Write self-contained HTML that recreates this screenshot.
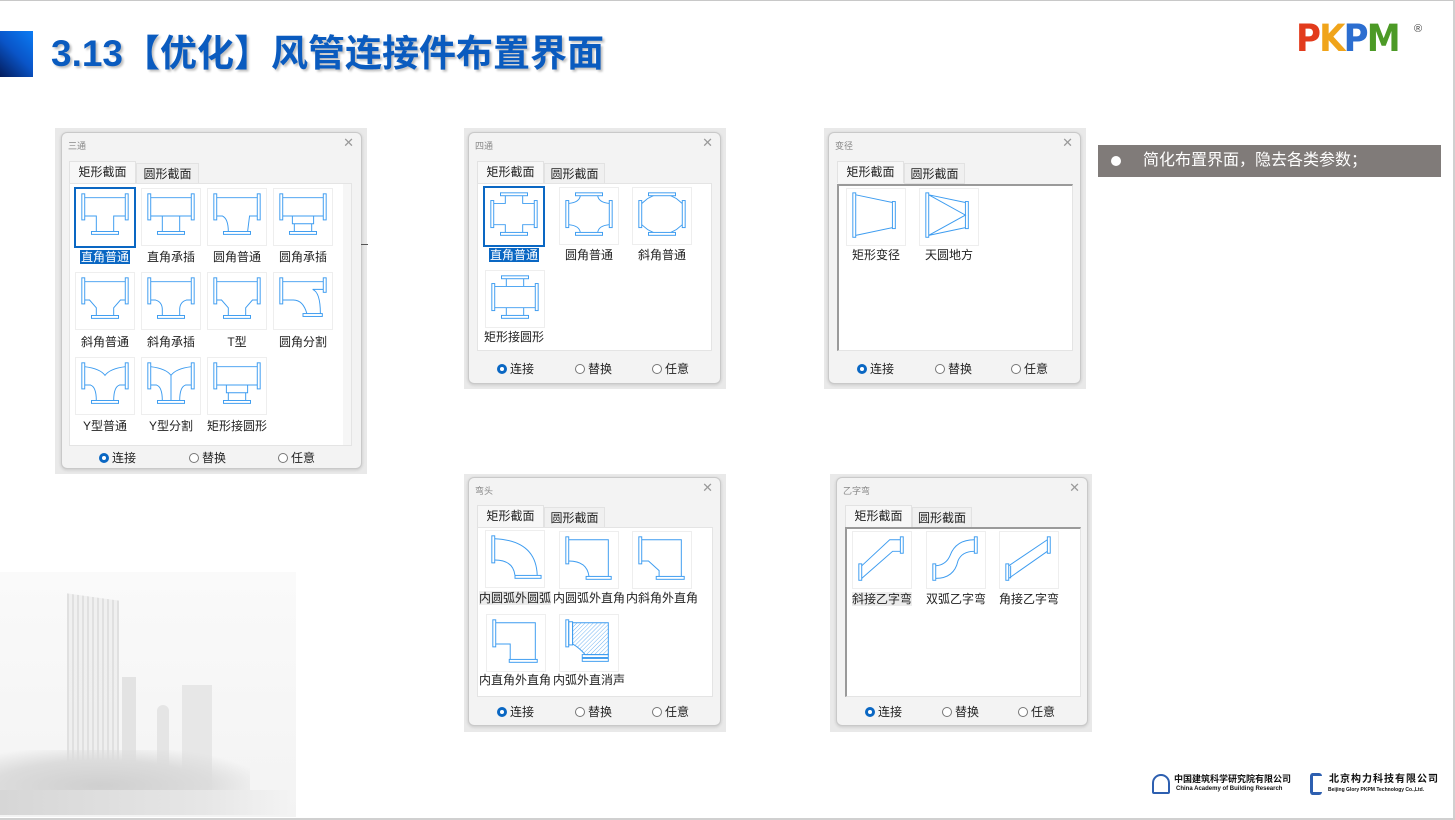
<!DOCTYPE html>
<html><head><meta charset="utf-8">
<style>
*{margin:0;padding:0;box-sizing:border-box}
body{width:1455px;height:820px;position:relative;overflow:hidden;background:#fff;font-family:"Liberation Sans","Noto Sans CJK SC",sans-serif;color:#222}
.a{position:absolute}
.outer{position:absolute;background:#e9e9e9}
.win{position:absolute;background:#f3f3f3;border:1px solid #c9c9c9;border-radius:6px;box-shadow:0 1px 3px rgba(0,0,0,.15)}
.tt{position:absolute;font-size:9px;color:#888;left:6px;top:6px}
.x{position:absolute;right:7px;top:2px;font-size:13px;color:#999}
.tab{position:absolute;height:21px;font-size:12px;line-height:20px;text-align:center;border:1px solid #e2e2e2;background:#f0f0f0;color:#222}
.tab.on{background:#f7f7f7;border-bottom:none;height:22px}
.pan{position:absolute;background:#fff;border:1px solid #e4e4e4}
.pan.in{border-left:2px solid #9a9a9a;border-top:2px solid #9a9a9a}
.ic{position:absolute;width:60px;height:58px;background:#fff;border:1px solid #eee}
.ic.sel{border:2px solid #0a67c3}
.ic svg{position:absolute;left:0;top:0;width:58px;height:56px}
.lb{position:absolute;width:90px;text-align:center;font-size:12px;line-height:15px;color:#222}
.lb span.s{background:#0a67c3;color:#fff;padding:0 1px}
.lb span.h{background:#ececec}
.rd{position:absolute;font-size:12px;line-height:14px;color:#222}
.rd i{display:inline-block;width:10px;height:10px;border:1px solid #777;border-radius:50%;vertical-align:-1px;margin-right:3px;background:#fff}
.rd i.on{border:3px solid #0a67c3}
svg .p{fill:none;stroke:#3d9cf0;stroke-width:1}
</style></head><body>
<svg width="0" height="0" style="position:absolute">
<defs>
<g id="fl"><rect class="p" x="6" y="5" width="3" height="27"/><rect class="p" x="51" y="5" width="3" height="27"/></g>
<symbol id="t1" viewBox="0 0 60 58"><use href="#fl"/><path class="p" d="M9 9H51M9 28H21V44M51 28H39V44"/><rect class="p" x="16" y="44" width="28" height="3"/></symbol>
<symbol id="t2" viewBox="0 0 60 58"><use href="#fl"/><path class="p" d="M9 9H51M9 28H51M21 28V44M39 28V44"/><rect class="p" x="16" y="44" width="28" height="3"/></symbol>
<symbol id="t3" viewBox="0 0 60 58"><use href="#fl"/><path class="p" d="M9 9H51M9 28H15Q21 31 21 44M51 28H43L41 44"/><rect class="p" x="16" y="44" width="28" height="3"/></symbol>
<symbol id="t4" viewBox="0 0 60 58"><use href="#fl"/><path class="p" d="M9 9H51M9 28H51M19 28V36H41V28M21 36V44M39 36V44"/><rect class="p" x="16" y="44" width="28" height="3"/></symbol>
<symbol id="t5" viewBox="0 0 60 58"><use href="#fl"/><path class="p" d="M9 9H51M9 28H14L21 36V44M51 28H46L39 36V44"/><rect class="p" x="16" y="44" width="28" height="3"/></symbol>
<symbol id="t6" viewBox="0 0 60 58"><use href="#fl"/><path class="p" d="M9 9H51M9 28H14Q21 30 21 38V44M51 28H46Q39 30 39 38V44"/><rect class="p" x="16" y="44" width="28" height="3"/></symbol>
<symbol id="t7" viewBox="0 0 60 58"><rect class="p" x="6" y="5" width="3" height="27"/><rect class="p" x="51" y="5" width="3" height="15"/><path class="p" d="M9 9H51M9 28H20Q30 28 34 42M51 17H40Q48 20 48 42"/><rect class="p" x="30" y="42" width="20" height="3"/></symbol>
<symbol id="t8" viewBox="0 0 60 58"><use href="#fl"/><path class="p" d="M9 9Q25 11 30 18Q35 11 51 9M9 28H15Q21 30 21 44M51 28H45Q39 30 39 44"/><rect class="p" x="16" y="44" width="28" height="3"/></symbol>
<symbol id="t9" viewBox="0 0 60 58"><use href="#fl"/><path class="p" d="M9 9Q25 11 30 18Q35 11 51 9M30 18V44M9 28H15Q21 30 21 44M51 28H45Q39 30 39 44"/><rect class="p" x="16" y="44" width="28" height="3"/></symbol>
<symbol id="c1" viewBox="0 0 60 58"><rect class="p" x="6" y="13" width="3" height="28"/><rect class="p" x="51" y="13" width="3" height="28"/><rect class="p" x="16" y="5" width="28" height="3"/><rect class="p" x="16" y="46" width="28" height="3"/><path class="p" d="M21 8V16H9M39 8V16H51M9 38H21V46M51 38H39V46"/></symbol>
<symbol id="c2" viewBox="0 0 60 58"><rect class="p" x="6" y="13" width="3" height="28"/><rect class="p" x="51" y="13" width="3" height="28"/><rect class="p" x="16" y="5" width="28" height="3"/><rect class="p" x="16" y="46" width="28" height="3"/><path class="p" d="M21 8Q20 15 9 16M39 8Q40 15 51 16M9 38Q20 39 21 46M51 38Q40 39 39 46"/></symbol>
<symbol id="c3" viewBox="0 0 60 58"><rect class="p" x="6" y="13" width="3" height="28"/><rect class="p" x="51" y="13" width="3" height="28"/><rect class="p" x="16" y="5" width="28" height="3"/><rect class="p" x="16" y="46" width="28" height="3"/><path class="p" d="M21 8L15 11L9 16M39 8L45 11L51 16M9 38L15 43L21 46M51 38L45 43L39 46"/></symbol>
<symbol id="c4" viewBox="0 0 60 58"><rect class="p" x="6" y="13" width="3" height="28"/><rect class="p" x="51" y="13" width="3" height="28"/><rect class="p" x="16" y="5" width="28" height="3"/><rect class="p" x="16" y="46" width="28" height="3"/><path class="p" d="M21 8V16M39 8V16M9 16H51M9 38H51M21 38V46M39 38V46"/></symbol>
<symbol id="r1" viewBox="0 0 60 58"><rect class="p" x="6" y="4" width="3" height="46"/><rect class="p" x="47" y="13" width="3" height="28"/><path class="p" d="M9 6L47 14M9 48L47 40"/></symbol>
<symbol id="r2" viewBox="0 0 60 58"><rect class="p" x="6" y="4" width="3" height="46"/><rect class="p" x="47" y="13" width="3" height="28"/><path class="p" d="M9 6L47 14M9 48L47 40M9 6L47 27L9 48"/></symbol>
<symbol id="e1" viewBox="0 0 60 58"><rect class="p" x="6" y="5" width="3" height="28"/><path class="p" d="M9 8Q52 10 53 46M9 30Q28 30 30 46"/><rect class="p" x="30" y="46" width="27" height="3"/></symbol>
<symbol id="e2" viewBox="0 0 60 58"><rect class="p" x="6" y="5" width="3" height="28"/><path class="p" d="M9 8H50V46M9 30Q28 30 30 46"/><rect class="p" x="27" y="46" width="26" height="3"/></symbol>
<symbol id="e3" viewBox="0 0 60 58"><rect class="p" x="6" y="5" width="3" height="28"/><path class="p" d="M9 8H50V46M9 30H16L27 40V46"/><rect class="p" x="24" y="46" width="29" height="3"/></symbol>
<symbol id="e4" viewBox="0 0 60 58"><rect class="p" x="6" y="5" width="3" height="28"/><path class="p" d="M9 8H50V46M9 30H24V46"/><rect class="p" x="23" y="46" width="29" height="3"/></symbol>
<pattern id="hatch" width="3" height="3" patternUnits="userSpaceOnUse" patternTransform="rotate(45)"><line x1="0" y1="0" x2="0" y2="3" stroke="#6fb3f2" stroke-width="1"/></pattern>
<symbol id="e5" viewBox="0 0 60 58"><rect class="p" x="6" y="5" width="3" height="28"/><rect class="p" x="9" y="7" width="4" height="24"/><path d="M13 8H50V41H26Q20 34 13 30Z" fill="url(#hatch)" stroke="#3d9cf0"/><rect class="p" x="23" y="41" width="27" height="3"/><rect class="p" x="23" y="45" width="27" height="3"/></symbol>
<symbol id="z1" viewBox="0 0 60 58"><rect class="p" x="6" y="33" width="3" height="17"/><rect class="p" x="49" y="5" width="3" height="17"/><path class="p" d="M9 35L38 8H49M9 48L41 20H49"/></symbol>
<symbol id="z2" viewBox="0 0 60 58"><rect class="p" x="6" y="33" width="3" height="17"/><rect class="p" x="49" y="5" width="3" height="17"/><path class="p" d="M9 35Q20 34 24 24Q30 8 49 8M9 48Q28 48 32 30Q36 20 49 20"/></symbol>
<symbol id="z3" viewBox="0 0 60 58"><rect class="p" x="6" y="33" width="3" height="17"/><rect class="p" x="49" y="5" width="3" height="17"/><path class="p" d="M9 35L49 8M11 35V48M9 48L49 20"/></symbol>
</defs></svg>

<!-- header -->
<div class="a" style="left:0;top:0;width:1455px;height:1px;background:#c8c8c8"></div>
<div class="a" style="left:1453px;top:0;width:2px;height:820px;background:#d0d0d0"></div>
<div class="a" style="left:0;top:818px;width:1455px;height:2px;background:#d0d0d0"></div>
<div class="a" style="left:0;top:31px;width:33px;height:46px;background:linear-gradient(45deg,#041c5c 0%,#0a55c8 50%,#0b7cf4 100%)"></div>
<div class="a" style="left:51px;top:31px;font-size:37px;font-weight:bold;color:#0a5bbf;line-height:46px;white-space:nowrap;text-shadow:2px 2px 2px rgba(0,0,0,.25)">3.13【优化】风管连接件布置界面</div>
<div class="a" style="left:1296px;top:17px;font-size:37px;font-weight:bold;font-family:'DejaVu Sans',sans-serif;line-height:44px;letter-spacing:-2px;white-space:nowrap;transform:scaleX(0.92);transform-origin:left"><span style="color:#e23b1c">P</span><span style="color:#f0a41a">K</span><span style="color:#2c6ed0">P</span><span style="color:#4c9a26">M</span></div>
<div class="a" style="left:1414px;top:23px;font-size:11px;color:#444">®</div>

<!-- bullet box -->
<div class="a" style="left:1098px;top:145px;width:343px;height:32px;background:#807b79"></div>
<div class="a" style="left:1111px;top:156px;width:10px;height:10px;border-radius:50%;background:#fff"></div>
<div class="a" style="left:1143px;top:150px;font-size:16px;line-height:22px;color:#fff;white-space:nowrap">简化布置界面，隐去各类参数；</div>

<!-- city bg -->
<div class="a" style="left:0;top:572px;width:296px;height:245px;background:linear-gradient(180deg,#fafafa,#f3f3f3)"></div>
<div class="a" style="left:67px;top:597px;width:52px;height:200px;background:repeating-linear-gradient(90deg,#dcdcdc 0 2px,#eeeeee 2px 5px);transform:skewY(8deg);opacity:.85"></div>
<div class="a" style="left:122px;top:677px;width:14px;height:120px;background:#e3e3e3"></div>
<div class="a" style="left:157px;top:705px;width:12px;height:92px;border-radius:6px 6px 0 0;background:#e5e5e5"></div>
<div class="a" style="left:182px;top:685px;width:30px;height:110px;background:#e7e7e7"></div>
<div class="a" style="left:0;top:750px;width:250px;height:60px;background:radial-gradient(ellipse at 40% 60%,#cfcfcf 0%,#dcdcdc 50%,rgba(240,240,240,0) 80%)"></div>
<div class="a" style="left:0;top:790px;width:290px;height:25px;background:linear-gradient(90deg,#d6d6d6,#e6e6e6 70%,#f3f3f3)"></div>

<!-- footer logos -->
<div class="a" style="left:1152px;top:774px;width:18px;height:20px;border:2px solid #2d5fb0;border-radius:9px 9px 2px 2px"></div>
<div class="a" style="left:1174px;top:774px;font-size:9px;font-weight:bold;line-height:10px;white-space:nowrap;color:#111">中国建筑科学研究院有限公司</div>
<div class="a" style="left:1176px;top:786px;font-size:6px;font-weight:bold;line-height:7px;white-space:nowrap;color:#111">China Academy of Building Research</div>
<div class="a" style="left:1310px;top:773px;width:12px;height:22px;border:3px solid #2d5fb0;border-right:none;border-radius:3px"></div>
<div class="a" style="left:1329px;top:774px;font-size:10px;font-weight:bold;line-height:11px;white-space:nowrap;color:#111;letter-spacing:1px">北京构力科技有限公司</div>
<div class="a" style="left:1328px;top:787px;font-size:5px;font-weight:bold;line-height:6px;white-space:nowrap;color:#111">Beijing Glory PKPM Technology Co.,Ltd.</div>

<!-- Dialog 1: 三通 -->
<div class="outer" style="left:55px;top:128px;width:312px;height:346px"></div>
<div class="win" style="left:61px;top:132px;width:301px;height:337px"><div class="tt">三通</div><div class="x">✕</div></div>
<div class="tab on" style="left:69px;top:161px;width:67px">矩形截面</div>
<div class="tab" style="left:136px;top:163px;width:63px">圆形截面</div>
<div class="pan" style="left:69px;top:183px;width:283px;height:263px"></div>
<div class="a" style="left:343px;top:184px;width:8px;height:261px;background:#f6f6f6"></div>
<div class="a" style="left:361px;top:244px;width:7px;height:1px;background:#555"></div>
<div class="ic sel" style="left:74px;top:187px;width:62px;height:61px"><svg><use href="#t1"/></svg></div>
<div class="ic" style="left:141px;top:188px"><svg><use href="#t2"/></svg></div>
<div class="ic" style="left:207px;top:188px"><svg><use href="#t3"/></svg></div>
<div class="ic" style="left:273px;top:188px"><svg><use href="#t4"/></svg></div>
<div class="lb" style="left:60px;top:250px"><span class="s">直角普通</span></div>
<div class="lb" style="left:126px;top:250px">直角承插</div>
<div class="lb" style="left:192px;top:250px">圆角普通</div>
<div class="lb" style="left:258px;top:250px">圆角承插</div>
<div class="ic" style="left:75px;top:272px"><svg><use href="#t5"/></svg></div>
<div class="ic" style="left:141px;top:272px"><svg><use href="#t6"/></svg></div>
<div class="ic" style="left:207px;top:272px"><svg><use href="#t5"/></svg></div>
<div class="ic" style="left:273px;top:272px"><svg><use href="#t7"/></svg></div>
<div class="lb" style="left:60px;top:335px">斜角普通</div>
<div class="lb" style="left:126px;top:335px">斜角承插</div>
<div class="lb" style="left:192px;top:335px">T型</div>
<div class="lb" style="left:258px;top:335px">圆角分割</div>
<div class="ic" style="left:75px;top:357px"><svg><use href="#t8"/></svg></div>
<div class="ic" style="left:141px;top:357px"><svg><use href="#t9"/></svg></div>
<div class="ic" style="left:207px;top:357px"><svg><use href="#t4"/></svg></div>
<div class="lb" style="left:60px;top:419px">Y型普通</div>
<div class="lb" style="left:126px;top:419px">Y型分割</div>
<div class="lb" style="left:192px;top:419px">矩形接圆形</div>
<div class="rd" style="left:99px;top:451px"><i class="on"></i>连接</div>
<div class="rd" style="left:189px;top:451px"><i></i>替换</div>
<div class="rd" style="left:278px;top:451px"><i></i>任意</div>

<!-- Dialog 2: 四通 -->
<div class="outer" style="left:464px;top:128px;width:262px;height:261px"></div>
<div class="win" style="left:468px;top:132px;width:253px;height:252px"><div class="tt">四通</div><div class="x">✕</div></div>
<div class="tab on" style="left:477px;top:161px;width:67px">矩形截面</div>
<div class="tab" style="left:544px;top:163px;width:61px">圆形截面</div>
<div class="pan" style="left:477px;top:183px;width:235px;height:168px"></div>
<div class="ic sel" style="left:483px;top:186px;width:62px;height:61px"><svg><use href="#c1"/></svg></div>
<div class="ic" style="left:559px;top:187px"><svg><use href="#c2"/></svg></div>
<div class="ic" style="left:632px;top:187px"><svg><use href="#c3"/></svg></div>
<div class="lb" style="left:469px;top:248px"><span class="s">直角普通</span></div>
<div class="lb" style="left:544px;top:248px">圆角普通</div>
<div class="lb" style="left:617px;top:248px">斜角普通</div>
<div class="ic" style="left:485px;top:270px"><svg><use href="#c4"/></svg></div>
<div class="lb" style="left:469px;top:330px">矩形接圆形</div>
<div class="rd" style="left:497px;top:362px"><i class="on"></i>连接</div>
<div class="rd" style="left:575px;top:362px"><i></i>替换</div>
<div class="rd" style="left:652px;top:362px"><i></i>任意</div>

<!-- Dialog 3: 变径 -->
<div class="outer" style="left:824px;top:128px;width:262px;height:261px"></div>
<div class="win" style="left:828px;top:132px;width:253px;height:252px"><div class="tt">变径</div><div class="x">✕</div></div>
<div class="tab on" style="left:837px;top:161px;width:67px">矩形截面</div>
<div class="tab" style="left:904px;top:163px;width:61px">圆形截面</div>
<div class="pan in" style="left:837px;top:184px;width:236px;height:167px"></div>
<div class="ic" style="left:846px;top:188px"><svg><use href="#r1"/></svg></div>
<div class="ic" style="left:919px;top:188px"><svg><use href="#r2"/></svg></div>
<div class="lb" style="left:831px;top:248px">矩形变径</div>
<div class="lb" style="left:904px;top:248px">天圆地方</div>
<div class="rd" style="left:857px;top:362px"><i class="on"></i>连接</div>
<div class="rd" style="left:935px;top:362px"><i></i>替换</div>
<div class="rd" style="left:1011px;top:362px"><i></i>任意</div>

<!-- Dialog 4: 弯头 -->
<div class="outer" style="left:464px;top:474px;width:262px;height:258px"></div>
<div class="win" style="left:468px;top:477px;width:253px;height:249px"><div class="tt">弯头</div><div class="x">✕</div></div>
<div class="tab on" style="left:477px;top:505px;width:67px">矩形截面</div>
<div class="tab" style="left:544px;top:507px;width:61px">圆形截面</div>
<div class="pan" style="left:477px;top:527px;width:236px;height:170px"></div>
<div class="ic" style="left:485px;top:530px"><svg><use href="#e1"/></svg></div>
<div class="ic" style="left:559px;top:531px"><svg><use href="#e2"/></svg></div>
<div class="ic" style="left:632px;top:531px"><svg><use href="#e3"/></svg></div>
<div class="lb" style="left:470px;top:591px"><span class="h">内圆弧外圆弧</span></div>
<div class="lb" style="left:544px;top:591px">内圆弧外直角</div>
<div class="lb" style="left:617px;top:591px">内斜角外直角</div>
<div class="ic" style="left:486px;top:614px"><svg><use href="#e4"/></svg></div>
<div class="ic" style="left:559px;top:614px"><svg><use href="#e5"/></svg></div>
<div class="lb" style="left:470px;top:673px">内直角外直角</div>
<div class="lb" style="left:544px;top:673px">内弧外直消声</div>
<div class="rd" style="left:497px;top:705px"><i class="on"></i>连接</div>
<div class="rd" style="left:575px;top:705px"><i></i>替换</div>
<div class="rd" style="left:652px;top:705px"><i></i>任意</div>

<!-- Dialog 5: 乙字弯 -->
<div class="outer" style="left:830px;top:474px;width:262px;height:258px"></div>
<div class="win" style="left:836px;top:477px;width:252px;height:249px"><div class="tt">乙字弯</div><div class="x">✕</div></div>
<div class="tab on" style="left:845px;top:505px;width:67px">矩形截面</div>
<div class="tab" style="left:912px;top:507px;width:60px">圆形截面</div>
<div class="pan in" style="left:845px;top:527px;width:236px;height:170px"></div>
<div class="ic" style="left:852px;top:531px"><svg><use href="#z1"/></svg></div>
<div class="ic" style="left:926px;top:531px"><svg><use href="#z2"/></svg></div>
<div class="ic" style="left:999px;top:531px"><svg><use href="#z3"/></svg></div>
<div class="lb" style="left:837px;top:592px"><span class="h">斜接乙字弯</span></div>
<div class="lb" style="left:911px;top:592px">双弧乙字弯</div>
<div class="lb" style="left:984px;top:592px">角接乙字弯</div>
<div class="rd" style="left:865px;top:705px"><i class="on"></i>连接</div>
<div class="rd" style="left:942px;top:705px"><i></i>替换</div>
<div class="rd" style="left:1018px;top:705px"><i></i>任意</div>
</body></html>
